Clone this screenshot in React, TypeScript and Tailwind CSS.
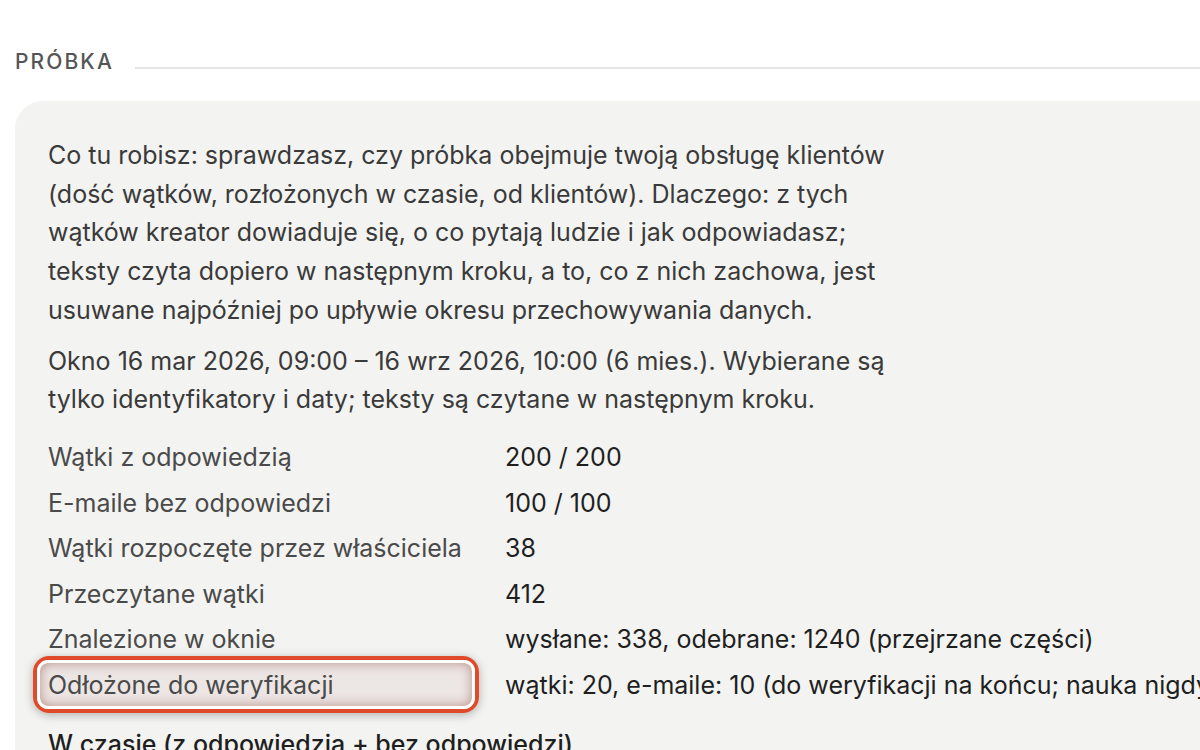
import React from 'react';

const ROWS: { label: string; value: string; flagged?: boolean }[] = [
  { label: 'Wątki z odpowiedzią', value: '200 / 200' },
  { label: 'E-maile bez odpowiedzi', value: '100 / 100' },
  { label: 'Wątki rozpoczęte przez właściciela', value: '38' },
  { label: 'Przeczytane wątki', value: '412' },
  { label: 'Znalezione w oknie', value: 'wysłane: 338, odebrane: 1240 (przejrzane części)' },
  {
    label: 'Odłożone do weryfikacji',
    value: 'wątki: 20, e-maile: 10 (do weryfikacji na końcu; nauka nigdy nie korzysta z odłożonych wątków)',
    flagged: true,
  },
];

function Row({ label, value, flagged }: { label: string; value: string; flagged?: boolean }) {
  return (
    <>
      <div className="relative h-[45.5px] flex items-center text-[#4a4a4a]">
        {flagged && (
          // review marker drawn over the label cell
          <div className="absolute left-[-15px] top-[-6px] w-[446px] h-[57px] rounded-[16px] border-[4px] border-[#df4a2a] shadow-[0_2px_10px_rgba(0,0,0,0.28)]">
            <div className="w-full h-full rounded-[11px] border-[3px] border-white bg-[#ece6e4] shadow-[inset_0_0_12px_rgba(150,85,75,0.6)]" />
          </div>
        )}
        <span className="relative">{label}</span>
      </div>
      <div className="h-[45.5px] flex items-center text-[#1f1f1f] whitespace-nowrap">{value}</div>
    </>
  );
}

export default function App() {
  return (
    <div
      className="h-[750px] w-[1200px] overflow-hidden bg-white"
      style={{ fontFamily: 'Inter, "Noto Sans", sans-serif' }}
    >
      <div className="flex items-center gap-[21px] pl-[15px] pt-[49px]">
        <h2 className="text-[21px] font-medium tracking-[0.1em] text-[#555] leading-[26px]">PRÓBKA</h2>
        <div className="flex-1 h-[2px] bg-[#e6e6e6] mt-[12px]" />
      </div>

      <div className="ml-[15px] mt-[26px] w-[1300px] rounded-[28px] bg-[#f3f3f1] pl-[33px] pt-[35px] pb-10 text-[25px] leading-[38.7px]">
        <p className="w-[850px] text-[#3a3a3a]">
          Co tu robisz: sprawdzasz, czy próbka obejmuje twoją obsługę klientów (dość wątków, rozłożonych w czasie,
          od klientów). Dlaczego: z tych wątków kreator dowiaduje się, o co pytają ludzie i jak odpowiadasz; teksty
          czyta dopiero w następnym kroku, a to, co z nich zachowa, jest usuwane najpóźniej po upływie okresu
          przechowywania danych.
        </p>
        <p className="mt-[12px] w-[850px] text-[#3a3a3a]">
          Okno 16 mar 2026, 09:00 – 16 wrz 2026, 10:00 (6 mies.). Wybierane są tylko identyfikatory i daty; teksty są
          czytane w następnym kroku.
        </p>

        <div className="mt-[16px] grid grid-cols-[457px_1fr]">
          {ROWS.map((r) => (
            <Row key={r.label} {...r} />
          ))}
        </div>

        <h3 className="mt-[17px] font-medium text-[#1f1f1f]">W czasie (z odpowiedzią + bez odpowiedzi)</h3>
      </div>
    </div>
  );
}
